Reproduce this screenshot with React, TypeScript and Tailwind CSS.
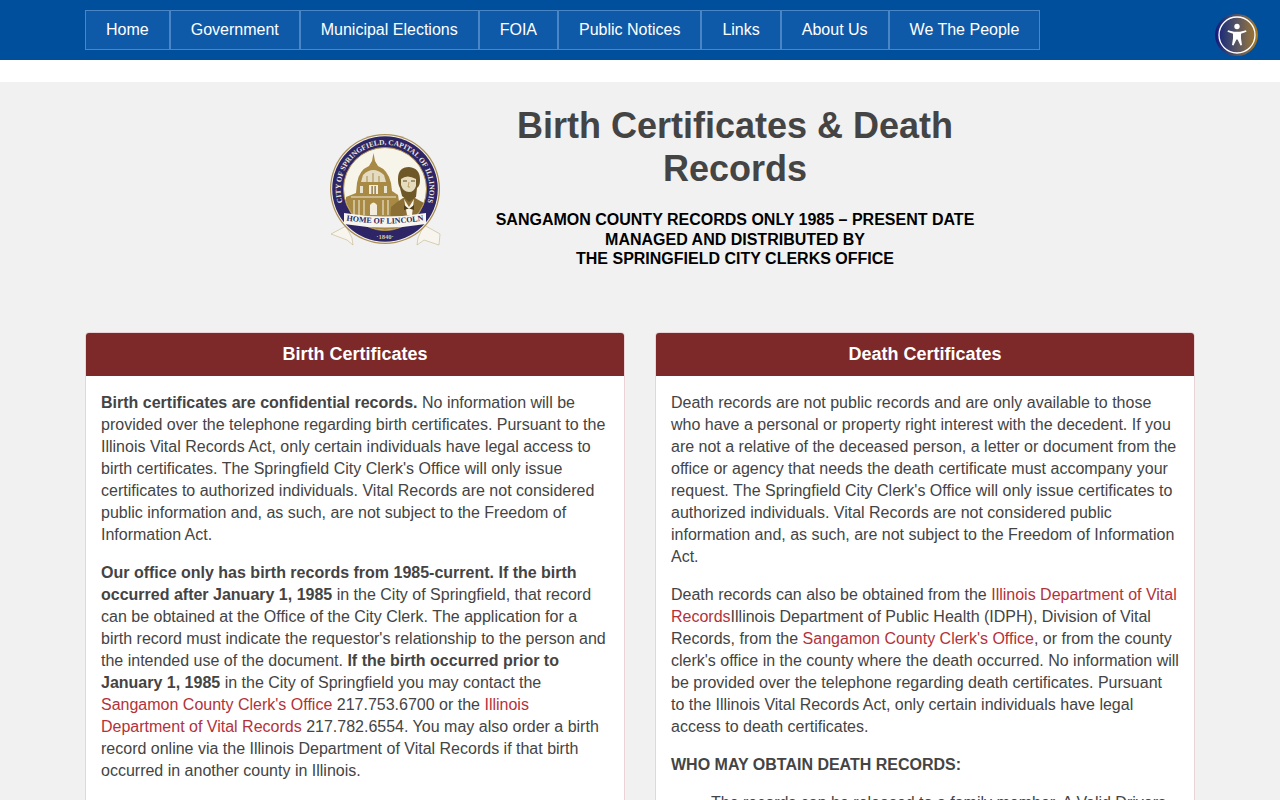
import React from "react";

const navItems = ["Home", "Government", "Municipal Elections", "FOIA", "Public Notices", "Links", "About Us", "We The People"];

const Red = ({ children }: { children: React.ReactNode }) => <a className="text-[#b3323a]">{children}</a>;

const Seal = () => (
  <svg viewBox="0 0 130 130" className="w-[130px] h-[130px] shrink-0">
    <defs>
      <path id="sealArc" d="M 24.7 83 A 44.5 44.5 0 1 1 105.3 83" />
      <path id="bannerArc" d="M 24 95 Q 65 102 106 95" />
      <clipPath id="inner">
        <circle cx="65" cy="64" r="41" />
      </clipPath>
    </defs>
    {/* ribbon tails */}
    <path d="M11 109 L26 101 L32 113 L33 120 L27 115 Z" fill="#f7f5ee" stroke="#c4b48a" strokeWidth="0.6" />
    <path d="M120 109 L104 100 L98 113 L97 120 L104 115 L119 120 Z" fill="#f7f5ee" stroke="#c4b48a" strokeWidth="0.6" />
    {/* rings */}
    <circle cx="65" cy="64" r="55" fill="#a98d52" />
    <circle cx="65" cy="64" r="53.8" fill="#f4f1e8" />
    <circle cx="65" cy="64" r="52.8" fill="#2d2566" />
    <circle cx="65" cy="64" r="41.5" fill="#f7f4ea" stroke="#b0924f" strokeWidth="1" />
    <text fontFamily="'Liberation Serif', serif" fontSize="7.4" fontWeight="700" fill="#efe9d6">
      <textPath href="#sealArc" startOffset="50%" textAnchor="middle">CITY OF SPRINGFIELD, CAPITAL OF ILLINOIS</textPath>
    </text>
    <g clipPath="url(#inner)">
      {/* dome */}
      <path d="M26 72 L36 68 L37 58 Q39 45 49 41 L52 36 L53.5 28 L55 36 L58 41 Q68 45 71 58 L72 66 L78 70 L84 108 L26 108 Z" fill="#a98a45" />
      <path d="M43 50 Q53 40 64 50 L66 57 L41 57 Z" fill="#e4dcc2" />
      <path d="M47 51 V57 M53 48 V57 M59 51 V57" stroke="#a98a45" strokeWidth="1" />
      <rect x="49" y="60" width="9" height="9" fill="#f1ecdc" />
      <rect x="51.5" y="61" width="1.2" height="8" fill="#7d6430" />
      <rect x="54.5" y="61" width="1.2" height="8" fill="#7d6430" />
      <rect x="40" y="61" width="3" height="7" fill="#e9e2cc" />
      <rect x="64" y="61" width="3" height="7" fill="#e9e2cc" />
      <path d="M31 72 H76" stroke="#efe9d8" strokeWidth="1.2" />
      <path d="M34 75 V90 M39 75 V90 M44 75 V90 M63 75 V90 M68 75 V90" stroke="#e9e2cc" strokeWidth="1.2" />
      <path d="M50 90 L50 80 Q53.5 75 57 80 L57 90 Z" fill="#f1ecdc" />
      {/* Lincoln */}
      <path d="M70 100 L71 82 Q78 76 83 73 L95 73 Q102 77 108 80 L108 100 Z" fill="#8a6e34" />
      <path d="M84 74 L89 82 L94 74 L92 90 L87 90 Z" fill="#f7f4ea" />
      <path d="M84 80 L89 84 L94 80 L94 85 L89 83.5 L84 85 Z" fill="#4f3d18" />
      <path d="M78 54 Q78 42 89 42 Q100 43 100 55 Q100 61 97 63 L96 72 L89 77 L82 71 L80 63 Q78 60 78 54 Z" fill="#6f5827" />
      <path d="M81 54 Q87 49 96 54 L96 61 Q94 67 89 67 Q83 67 81 60 Z" fill="#e6dcbf" />
      <path d="M83 56 H87 M91 56 H95" stroke="#5f4a20" strokeWidth="1" />
      <path d="M89 57 L88 62 H90" fill="none" stroke="#a98a45" strokeWidth="0.7" />
    </g>
    {/* banner */}
    <path d="M24 88 Q65 95 106 88 L106 99 Q65 106 24 99 Z" fill="#f7f5ee" />
    <text fontFamily="'Liberation Serif', serif" fontSize="8" fontWeight="700" fill="#2d2566">
      <textPath href="#bannerArc" startOffset="50%" textAnchor="middle">HOME OF LINCOLN</textPath>
    </text>
    <text x="65" y="114" textAnchor="middle" fontFamily="'Liberation Serif', serif" fontSize="6.6" fontWeight="700" fill="#d8c99c">·1840·</text>
  </svg>
);

const AccessButton = () => (
  <div className="absolute left-[1215px] top-[14px] w-[43px] h-[42px] rounded-full bg-gradient-to-r from-[#15157c] to-[#a8790c] blur-[0.4px] flex items-center justify-center">
    <svg viewBox="0 0 40 40" className="w-[40px] h-[40px]">
      <circle cx="20" cy="20" r="18" fill="none" stroke="#fff" strokeWidth="1.3" />
      <circle cx="20" cy="11.5" r="2.7" fill="#fff" />
      <path d="M11 15.2 L17 16.8 H23 L29 15.2 L29.5 16.8 L24 18.8 V23.5 L25 30 L23.5 30.4 L20.6 24.5 H19.4 L16.5 30.4 L15 30 L16 23.5 V18.8 L10.5 16.8 Z" fill="#fff" />
    </svg>
  </div>
);

const Card = ({ title, children }: { title: string; children: React.ReactNode }) => (
  <div className="w-[540px] rounded-[4px] border border-[#ead3d7] bg-white overflow-hidden">
    <div className="h-[44px] -mt-px -mx-px bg-[#7d2829] text-white text-[18px] font-bold flex items-center justify-center">{title}</div>
    <div className="p-[15px] pt-[16px] text-[16px] leading-[22px] text-[#444] space-y-4">{children}</div>
  </div>
);

export default function App() {
  return (
    <div className="relative h-[800px] overflow-hidden bg-white font-['Liberation_Sans',Arial,sans-serif]">
      <nav className="h-[60px] bg-[#004f9d] pt-[10px] pl-[85px] flex">
        {navItems.map((item) => (
          <a key={item} className="h-[40px] px-5 flex items-center border border-[#4a86c6] bg-[#0f5aa8] text-white text-[16px]">
            {item}
          </a>
        ))}
      </nav>
      <AccessButton />

      <main className="mt-[22px] bg-[#f1f1f1] h-[718px]">
        <header className="h-[250px] pl-[320px] flex">
          <div className="pt-[43px]">
            <Seal />
          </div>
          <div className="w-[490px] ml-[40px] pt-[22px] text-center">
            <h1 className="text-[36px] leading-[43px] font-bold text-[#444]">Birth Certificates &amp; Death Records</h1>
            <p className="mt-[20px] text-[16px] leading-[19.5px] font-bold text-black">
              SANGAMON COUNTY RECORDS ONLY 1985 – PRESENT DATE
              <br />
              MANAGED AND DISTRIBUTED BY
              <br />
              THE SPRINGFIELD CITY CLERKS OFFICE
            </p>
          </div>
        </header>

        <div className="px-[85px] flex gap-[30px]">
          <Card title="Birth Certificates">
            <p>
              <b>Birth certificates are confidential records.</b> No information will be provided over the telephone regarding birth certificates. Pursuant to the Illinois Vital Records Act, only certain individuals have legal access to birth certificates. The Springfield City Clerk's Office will only issue certificates to authorized individuals. Vital Records are not considered public information and, as such, are not subject to the Freedom of Information Act.
            </p>
            <p>
              <b>Our office only has birth records from 1985-current. If the birth occurred after January 1, 1985</b> in the City of Springfield, that record can be obtained at the Office of the City Clerk. The application for a birth record must indicate the requestor's relationship to the person and the intended use of the document. <b>If the birth occurred prior to January 1, 1985</b> in the City of Springfield you may contact the <Red>Sangamon County Clerk's Office</Red> 217.753.6700 or the <Red>Illinois Department of Vital Records</Red> 217.782.6554. You may also order a birth record online via the Illinois Department of Vital Records if that birth occurred in another county in Illinois.
            </p>
          </Card>
          <Card title="Death Certificates">
            <p>
              Death records are not public records and are only available to those who have a personal or property right interest with the decedent. If you are not a relative of the deceased person, a letter or document from the office or agency that needs the death certificate must accompany your request. The Springfield City Clerk's Office will only issue certificates to authorized individuals. Vital Records are not considered public information and, as such, are not subject to the Freedom of Information Act.
            </p>
            <p>
              Death records can also be obtained from the <Red>Illinois Department of Vital Records</Red>Illinois Department of Public Health (IDPH), Division of Vital Records, from the <Red>Sangamon County Clerk's Office</Red>, or from the county clerk's office in the county where the death occurred. No information will be provided over the telephone regarding death certificates. Pursuant to the Illinois Vital Records Act, only certain individuals have legal access to death certificates.
            </p>
            <p>
              <b>WHO MAY OBTAIN DEATH RECORDS:</b>
            </p>
            <ul className="pl-10">
              <li>The records can be released to a family member. A Valid Drivers</li>
            </ul>
          </Card>
        </div>
      </main>
    </div>
  );
}
